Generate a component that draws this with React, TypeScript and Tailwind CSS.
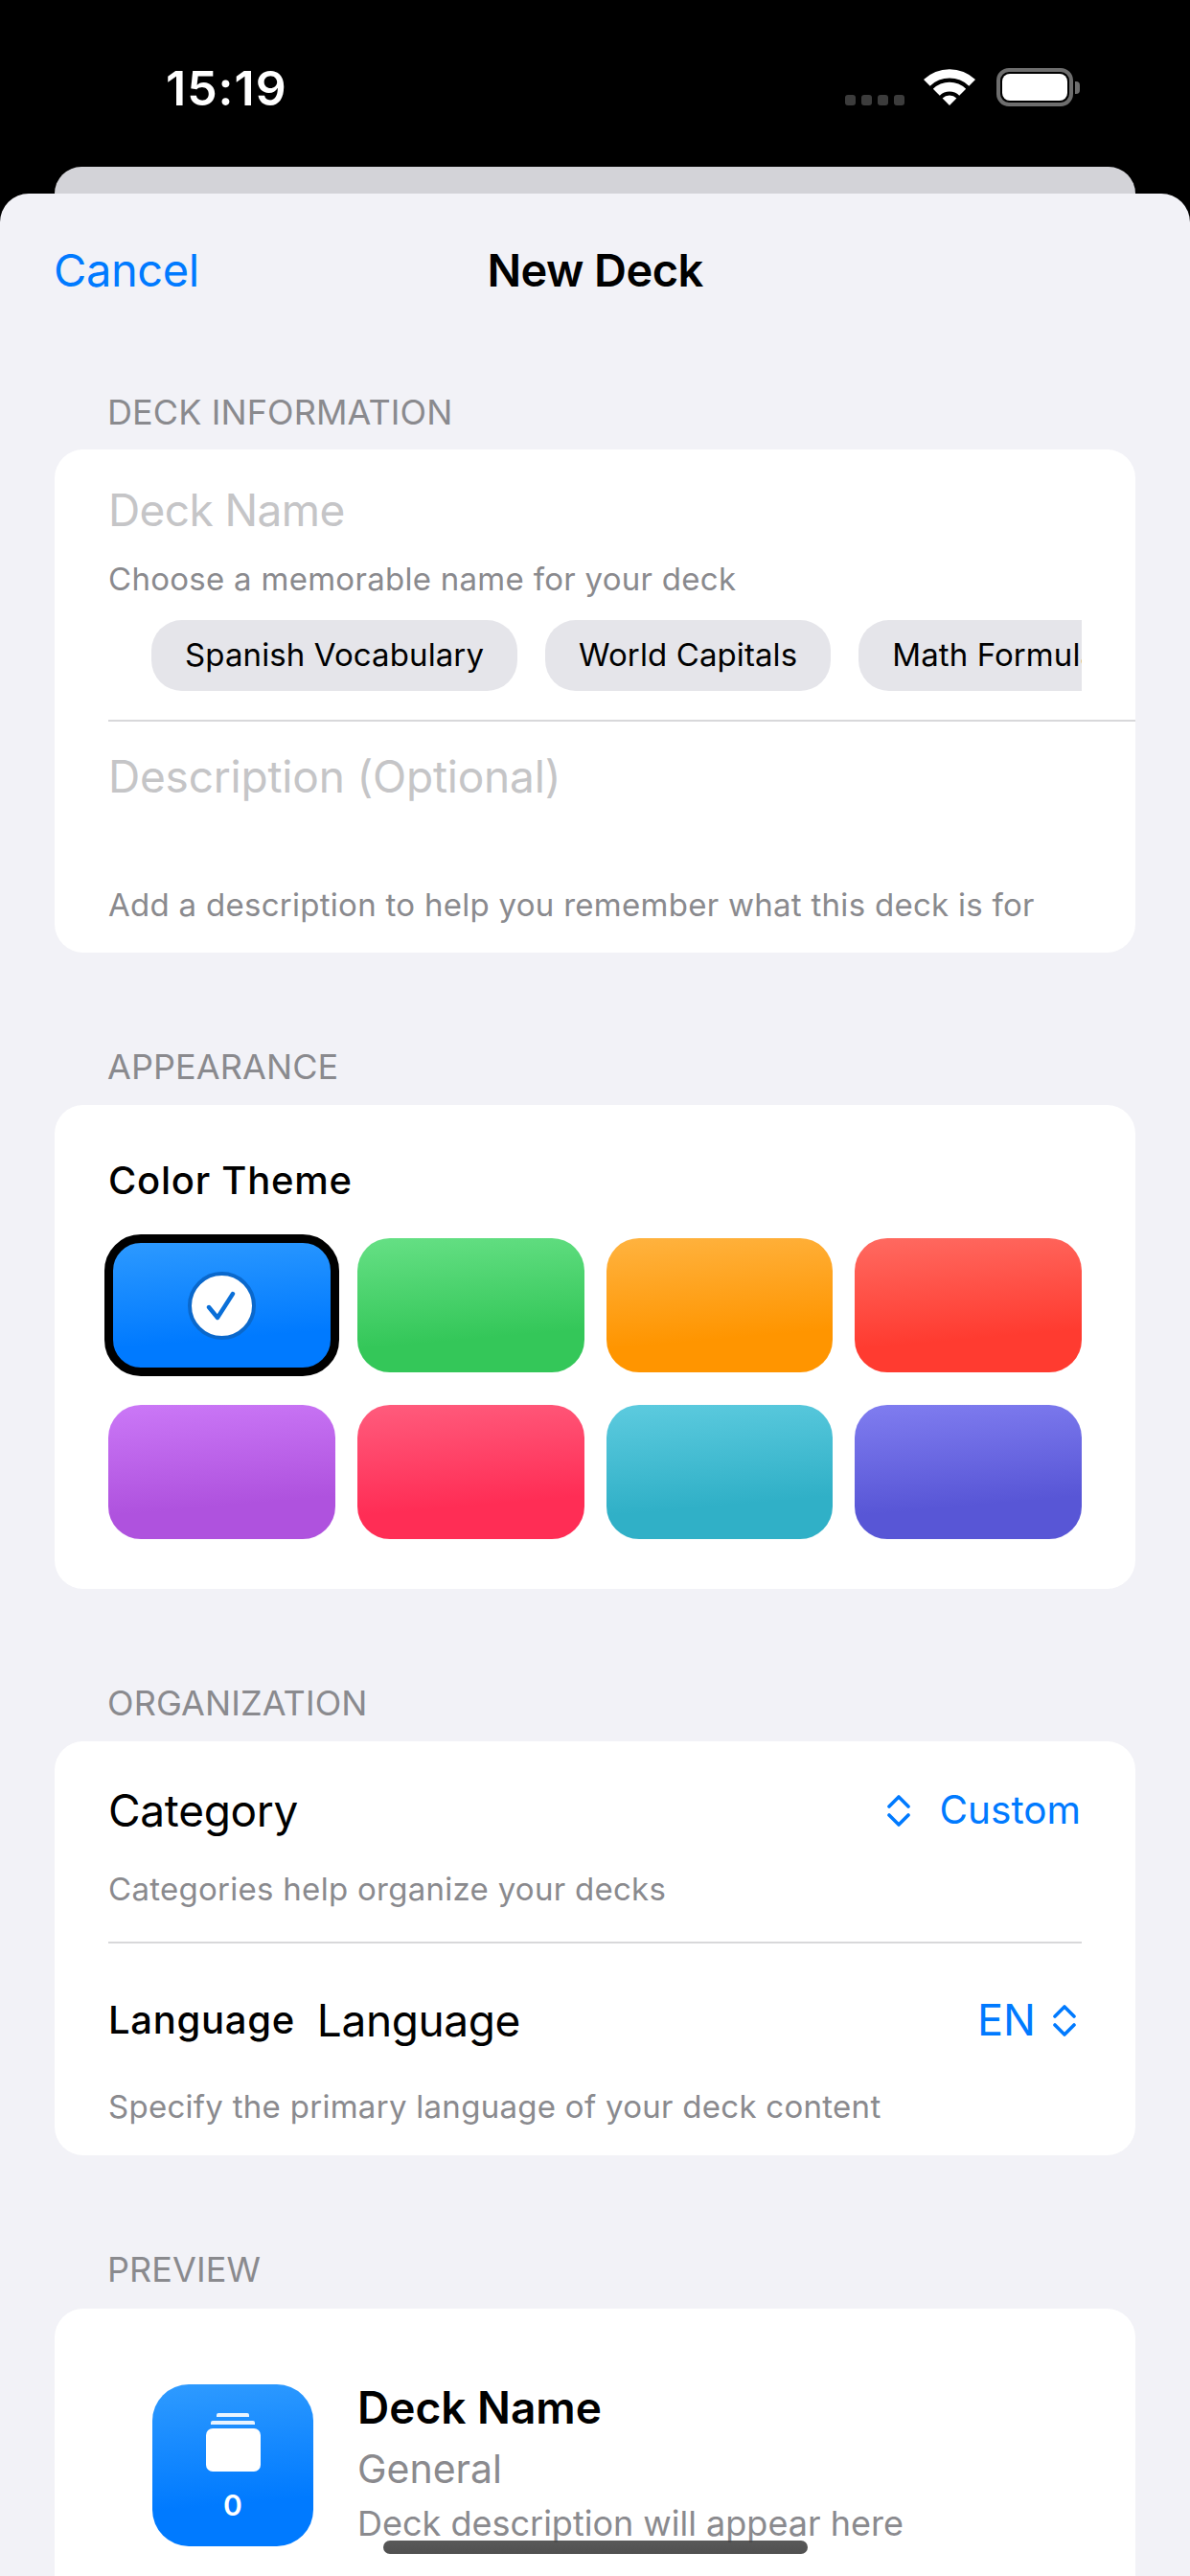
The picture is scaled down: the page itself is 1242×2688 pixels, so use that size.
const Chevrons = () => (
  <svg width="24" height="35" viewBox="0 0 24 35" fill="none" stroke="#007aff" strokeWidth="3.6" strokeLinecap="round" strokeLinejoin="round">
    <path d="M2 13 L12 3 L22 13" />
    <path d="M2 22 L12 32 L22 22" />
  </svg>
);

const Wifi = () => (
  <svg width="54" height="39" viewBox="0 0 54 39" fill="#fff">
    <path d="M0 12 A39 39 0 0 1 54 12 L47.3 18.7 A29 29 0 0 0 6.7 18.7 Z" />
    <path d="M9.8 21.8 A24.5 24.5 0 0 1 44.2 21.8 L37.2 28.8 A14.5 14.5 0 0 0 16.8 28.8 Z" />
    <path d="M19.6 31.6 A10.5 10.5 0 0 1 34.4 31.6 L27 39 Z" />
  </svg>
);

const SectionTitle = ({ children }: { children: string }) => (
  <div className="pl-[112px] text-[36px] leading-[48px] text-[#8a8a8e] tracking-[0.1px]">{children}</div>
);

const Helper = ({ children, className }: { children: string; className: string }) => (
  <div className={`text-[33px] leading-[44px] text-[#8a8a8e] tracking-[0.28px] ${className}`}>{children}</div>
);

const chip = "shrink-0 h-[74px] px-[35px] flex items-center rounded-[32px] bg-[#e5e5ea] text-[33px] text-black tracking-[0.1px]";

const tiles = [
  "bg-[linear-gradient(175deg,#2f9bff_0%,#007aff_72%)] outline-[9px] outline-offset-[-5px] outline-black",
  "bg-[linear-gradient(175deg,#66e085_0%,#34c759_72%)]",
  "bg-[linear-gradient(175deg,#ffb340_0%,#ff9500_72%)]",
  "bg-[linear-gradient(175deg,#ff6a61_0%,#ff3b30_72%)]",
  "bg-[linear-gradient(175deg,#cb78f7_0%,#af52de_72%)]",
  "bg-[linear-gradient(175deg,#ff5c7d_0%,#ff2d55_72%)]",
  "bg-[linear-gradient(175deg,#5dcbdf_0%,#30b0c7_72%)]",
  "bg-[linear-gradient(175deg,#807df0_0%,#5856d6_72%)]",
];

export default function App() {
  return (
    <div className="relative w-[1242px] h-[2688px] overflow-hidden bg-black flex flex-col font-['Inter',sans-serif]">
      {/* status bar */}
      <div className="h-[174px] shrink-0 flex items-start justify-between pl-[173px] pr-[115px] pt-[66px]">
        <div className="text-[50px] leading-[52px] font-semibold text-white tracking-[1px]">15:19</div>
        <div className="flex items-start pt-[5px]">
          <div className="flex gap-[6px] pt-[28px] mr-[20px]">
            <div className="w-[11px] h-[11px] rounded-[3px] bg-[#3c3c3c]" />
            <div className="w-[11px] h-[11px] rounded-[3px] bg-[#3c3c3c]" />
            <div className="w-[11px] h-[11px] rounded-[3px] bg-[#3c3c3c]" />
            <div className="w-[11px] h-[11px] rounded-[3px] bg-[#3c3c3c]" />
          </div>
          <Wifi />
          <div className="ml-[22px] flex items-center gap-[2px]">
            <div className="w-[80px] h-[40px] rounded-[13px] border-[4px] border-[#6e6e6e] p-[2px]">
              <div className="w-full h-full rounded-[8px] bg-white" />
            </div>
            <div className="w-[5px] h-[13px] rounded-r-[4px] bg-[#6e6e6e]" />
          </div>
        </div>
      </div>

      {/* sheet behind */}
      <div className="mx-[57px] h-[28px] shrink-0 rounded-t-[30px] bg-[#d3d3d8]" />

      {/* sheet */}
      <div className="flex-1 min-h-0 rounded-t-[30px] bg-[#f2f2f7]">
        <div className="h-[160px] px-[56px] flex items-center mb-[44px]">
          <div className="flex-1 text-[47px] text-[#007aff] tracking-[-0.4px]">Cancel</div>
          <div className="text-[47px] font-semibold text-black tracking-[-0.6px]">New Deck</div>
          <div className="flex-1" />
        </div>

        <SectionTitle>DECK INFORMATION</SectionTitle>
        <div className="mx-[57px] mt-[15px] rounded-[30px] bg-white pt-[33px] pb-[28px] pl-[56px]">
          <div className="text-[46px] leading-[60px] text-[#c5c5c7] tracking-[-0.6px]">Deck Name</div>
          <Helper className="mt-[20px]">Choose a memorable name for your deck</Helper>
          <div className="mt-[21px] mr-[56px] pl-[45px] flex gap-[29px] overflow-hidden">
            <div className={chip}>Spanish Vocabulary</div>
            <div className={chip}>World Capitals</div>
            <div className={chip}>Math Formulas</div>
          </div>
          <div className="mt-[30px] h-[2px] bg-[#d8d8da]" />
          <div className="mt-[27px] text-[46px] leading-[60px] text-[#c5c5c7] tracking-[-0.2px]">Description (Optional)</div>
          <Helper className="mt-[82px]">Add a description to help you remember what this deck is for</Helper>
        </div>

        <div className="mt-[95px]"><SectionTitle>APPEARANCE</SectionTitle></div>
        <div className="mx-[57px] mt-[16px] rounded-[30px] bg-white pt-[53px] pb-[52px] px-[56px]">
          <div className="text-[40px] leading-[52px] font-medium text-black tracking-[0.75px]">Color Theme</div>
          <div className="mt-[34px] grid grid-cols-4 gap-x-[23px] gap-y-[34px]">
            {tiles.map((t, i) => (
              <div key={i} className={`h-[140px] rounded-[34px] flex items-center justify-center ${t}`}>
                {i === 0 && (
                  <div className="w-[71px] h-[71px] rounded-full bg-white border-[4.5px] border-[#0a68cc] flex items-center justify-center">
                    <svg width="32" height="32" viewBox="0 0 32 32" fill="none" stroke="#0a6fd8" strokeWidth="4.4" strokeLinecap="round" strokeLinejoin="round">
                      <path d="M3 18 L12 29 L28 4" />
                    </svg>
                  </div>
                )}
              </div>
            ))}
          </div>
        </div>

        <div className="mt-[95px]"><SectionTitle>ORGANIZATION</SectionTitle></div>
        <div className="mx-[57px] mt-[16px] rounded-[30px] bg-white pt-[42px] pb-[29px] px-[56px]">
          <div className="h-[60px] flex items-center justify-between">
            <div className="text-[46px] text-black tracking-[-0.3px]">Category</div>
            <div className="flex items-center gap-[30px] pr-[1px]">
              <Chevrons />
              <div className="text-[40.5px] text-[#007aff]">Custom</div>
            </div>
          </div>
          <Helper className="mt-[30px]">Categories help organize your decks</Helper>
          <div className="mt-[33px] h-[2px] bg-[#d8d8da]" />
          <div className="mt-[50px] h-[60px] flex items-center justify-between">
            <div className="flex items-center gap-[23px]">
              <div className="text-[40px] font-medium text-black tracking-[0.7px]">Language</div>
              <div className="text-[46px] text-black tracking-[-0.4px]">Language</div>
            </div>
            <div className="flex items-center gap-[18px] pr-[6px]">
              <div className="text-[45px] text-[#007aff]">EN</div>
              <Chevrons />
            </div>
          </div>
          <Helper className="mt-[38px]">Specify the primary language of your deck content</Helper>
        </div>

        <div className="mt-[95px]"><SectionTitle>PREVIEW</SectionTitle></div>
        <div className="mx-[57px] mt-[17px] h-[400px] rounded-[30px] bg-white pt-[79px] pl-[102px] flex items-start gap-[46px]">
          <div className="w-[168px] h-[169px] shrink-0 rounded-[38px] bg-[linear-gradient(175deg,#2f9bff_0%,#007aff_72%)] flex flex-col items-center pt-[30px]">
            <div className="w-[34px] h-[4px] rounded-t-[2px] bg-white/90" />
            <div className="mt-[4px] w-[46px] h-[4px] rounded-t-[2px] bg-white/90" />
            <div className="mt-[4px] w-[57px] h-[45px] rounded-[7px] bg-white" />
            <div className="mt-[17px] text-[30px] leading-[36px] font-semibold text-white">0</div>
          </div>
          <div className="flex flex-col">
            <div className="text-[46px] leading-[56px] font-semibold text-black -mt-[4px]">Deck Name</div>
            <div className="mt-[8px] text-[41px] leading-[56px] text-[#8a8a8e]">General</div>
            <div className="mt-[1px] text-[36px] leading-[56px] text-[#8a8a8e]">Deck description will appear here</div>
          </div>
        </div>
      </div>

      {/* home indicator */}
      <div className="absolute left-[400px] top-[2651px] w-[443px] h-[14px] rounded-[7px] bg-[linear-gradient(180deg,rgba(70,70,70,0.9),rgba(50,50,50,0.85))]" />
    </div>
  );
}
